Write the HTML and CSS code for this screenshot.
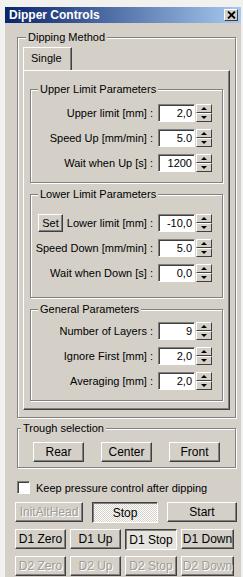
FILE: index.html
```html
<!DOCTYPE html>
<html>
<head>
  <title>Dipper Controls</title>
  <link rel="stylesheet" href="styles.css">
</head>
<body>

<div class="window">
  <div class="titlebar">
    <span class="title">Dipper Controls</span>
    <span class="close">
      <svg width="9" height="8" viewBox="0 0 9 8"><path d="M1 0.5 L8 7.5 M8 0.5 L1 7.5" stroke="#000" stroke-width="1.8"/></svg>
    </span>
  </div>

  <div class="client">
    <fieldset class="group method">
      <legend>Dipping Method</legend>
      <div class="tab">Single</div>
      <div class="tab-panel">

        <fieldset class="group params upper">
          <legend>Upper Limit Parameters</legend>
          <div class="row"><span class="lbl">Upper limit [mm] :</span><span class="field">2,0</span><span class="spin"><i class="up"></i><i class="down"></i></span></div>
          <div class="row"><span class="lbl">Speed Up [mm/min] :</span><span class="field">5.0</span><span class="spin"><i class="up"></i><i class="down"></i></span></div>
          <div class="row"><span class="lbl">Wait when Up [s] :</span><span class="field">1200</span><span class="spin"><i class="up"></i><i class="down"></i></span></div>
        </fieldset>

        <fieldset class="group params lower">
          <legend>Lower Limit Parameters</legend>
          <div class="row"><span class="btn set">Set</span><span class="lbl">Lower limit [mm] :</span><span class="field">-10,0</span><span class="spin"><i class="up"></i><i class="down"></i></span></div>
          <div class="row"><span class="lbl">Speed Down [mm/min] :</span><span class="field">5.0</span><span class="spin"><i class="up"></i><i class="down"></i></span></div>
          <div class="row"><span class="lbl">Wait when Down [s] :</span><span class="field">0,0</span><span class="spin"><i class="up"></i><i class="down"></i></span></div>
        </fieldset>

        <fieldset class="group params general">
          <legend>General Parameters</legend>
          <div class="row"><span class="lbl">Number of Layers :</span><span class="field">9</span><span class="spin"><i class="up"></i><i class="down"></i></span></div>
          <div class="row"><span class="lbl">Ignore First [mm] :</span><span class="field">2,0</span><span class="spin"><i class="up"></i><i class="down"></i></span></div>
          <div class="row"><span class="lbl">Averaging [mm] :</span><span class="field">2,0</span><span class="spin"><i class="up"></i><i class="down"></i></span></div>
        </fieldset>

      </div>
    </fieldset>

    <fieldset class="group trough">
      <legend>Trough selection</legend>
      <div class="trough-btns">
        <span class="btn">Rear</span>
        <span class="btn">Center</span>
        <span class="btn">Front</span>
      </div>
    </fieldset>

    <div class="check-row">
      <span class="checkbox"></span>
      <span>Keep pressure control after dipping</span>
    </div>

    <div class="btn-row three">
      <span class="btn disabled">InitAltHead</span>
      <span class="btn pressed dither">Stop</span>
      <span class="btn">Start</span>
    </div>
    <div class="btn-row four">
      <span class="btn">D1 Zero</span>
      <span class="btn">D1 Up</span>
      <span class="btn pressed">D1 Stop</span>
      <span class="btn">D1 Down</span>
    </div>
    <div class="btn-row four">
      <span class="btn disabled">D2 Zero</span>
      <span class="btn disabled">D2 Up</span>
      <span class="btn disabled">D2 Stop</span>
      <span class="btn disabled">D2 Down</span>
    </div>
  </div>
</div>

</body>
</html>
```

FILE: styles.css
```css
body {
  margin: 0;
  background: #f1f1ef;
  font-family: "Liberation Sans", Arial, sans-serif;
  font-size: 11px;
  color: #000;
}

.window {
  margin: 7px 2px 0 5px;
  height: 570px;
  background: #d4d0c8;
  overflow: hidden;
}

.titlebar {
  height: 16px;
  display: flex;
  align-items: center;
  justify-content: space-between;
  padding: 0 3px 0 4px;
  background: linear-gradient(90deg, #0a246a, #a6caf0);
  color: #fff;
  font-weight: bold;
  font-size: 12px;
}

.close {
  width: 12px;
  height: 10px;
  display: flex;
  align-items: center;
  justify-content: center;
  background: #d4d0c8;
  border: 1px solid;
  border-color: #fff #404040 #404040 #fff;
}

.client {
  padding: 8px 5px 0 12px;
}

/* group boxes */
.group {
  margin: 0;
  border: 1px solid #808080;
  box-shadow: inset 1px 1px 0 #fff, 1px 1px 0 #fff;
}

.group legend {
  padding: 0 2px;
  margin-left: 3px;
  line-height: 13px;
  background: #d4d0c8;
}

.method {
  padding: 3px 5px 7px 5px;
}

.tab {
  display: inline-block;
  width: 40px;
  height: 22px;
  line-height: 21px;
  padding-left: 7px;
  border: 1px solid;
  border-color: #fff #404040 transparent #fff;
  border-bottom: none;
  box-shadow: inset -1px 0 0 #808080;
  vertical-align: bottom;
}

.tab-panel {
  border: 1px solid;
  border-color: #fff #404040 #404040 #fff;
  box-shadow: inset -1px -1px 0 #808080;
  padding: 12px 6px 3px 6px;
}

.params {
  padding: 8px 10px 10px 4px;
  margin-bottom: 5px;
}

.params.lower {
  padding-top: 13px;
  padding-bottom: 15px;
}

.params.general {
  padding-top: 6px;
}

.row {
  display: flex;
  justify-content: flex-end;
  align-items: center;
  height: 18px;
  margin-top: 7px;
}

.row:first-of-type {
  margin-top: 0;
}

.lbl {
  margin-right: 5px;
  white-space: nowrap;
}

.field {
  width: 32px;
  height: 14px;
  padding: 2px 2px 0 1px;
  text-align: right;
  background: #fff;
  border: 1px solid;
  border-color: #808080 #fff #fff #808080;
  box-shadow: inset 1px 1px 0 #404040;
}

.spin {
  width: 16px;
  height: 18px;
  margin-left: 1px;
  display: flex;
  flex-direction: column;
}

.spin i {
  flex: 1;
  display: flex;
  align-items: center;
  justify-content: center;
  border: 1px solid;
  border-color: #fff #404040 #404040 #fff;
}

.spin i::after {
  content: "";
  border-left: 3px solid transparent;
  border-right: 3px solid transparent;
}

.spin .up::after { border-bottom: 3px solid #000; }
.spin .down::after { border-top: 3px solid #000; }

/* buttons */
.btn {
  display: flex;
  align-items: center;
  justify-content: center;
  height: 18px;
  white-space: nowrap;
  overflow: hidden;
  background: #d4d0c8;
  border: 1px solid;
  border-color: #fff #404040 #404040 #fff;
  box-shadow: inset -1px -1px 0 #808080;
  font-size: 12px;
}

.btn.set {
  width: 23px;
  margin-right: auto;
  margin-left: 3px;
  font-size: 11px;
  height: 16px;
}

.btn.pressed {
  border-color: #404040 #fff #fff #404040;
  box-shadow: inset 1px 1px 0 #808080;
  background: #e6e4de;
  padding-top: 1px;
}

.btn.dither {
  background: repeating-conic-gradient(#fff 0 25%, #d4d0c8 0 50%) 0 0 / 2px 2px;
}

.btn.disabled {
  color: #a09c96;
  text-shadow: 1px 1px 0 #fff;
}

.trough {
  margin-top: 4px;
  padding: 7px 0 5px 0;
}

.trough-btns {
  display: flex;
  justify-content: center;
  gap: 17px;
}

.trough-btns .btn {
  width: 49px;
}

.check-row {
  display: flex;
  align-items: center;
  gap: 6px;
  margin: 13px 0 0 0;
}

.checkbox {
  width: 11px;
  height: 11px;
  background: #fff;
  border: 1px solid;
  border-color: #808080 #fff #fff #808080;
  box-shadow: inset 1px 1px 0 #404040;
}

.btn-row {
  display: grid;
  margin-left: -2px;
  margin-right: -2px;
}

.btn-row.three {
  grid-template-columns: 68px 66px 70px;
  gap: 9px;
  margin-top: 8px;
}

.btn-row.four {
  grid-template-columns: 51px 51px 52px 53px;
  gap: 4px;
  margin-top: 6px;
}
```
